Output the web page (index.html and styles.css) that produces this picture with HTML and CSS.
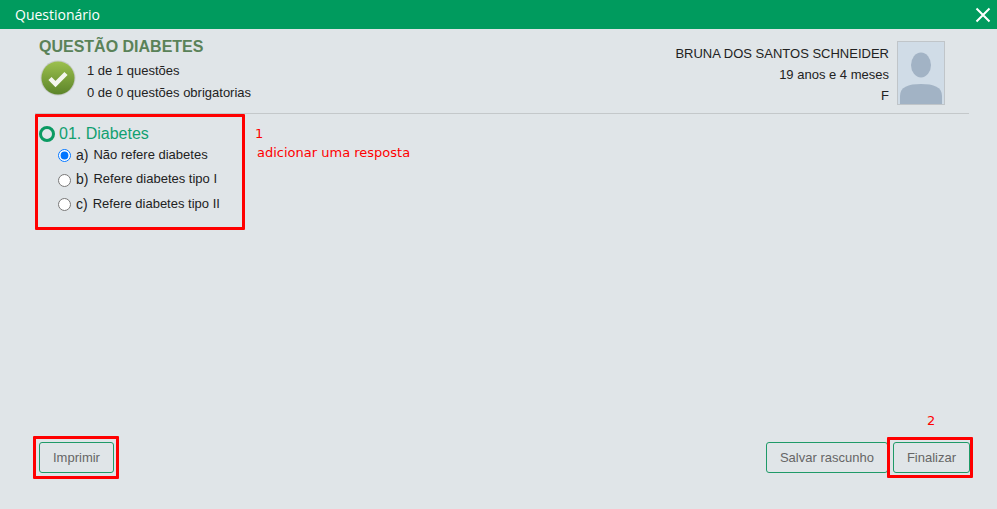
FILE: index.html
```html
<!DOCTYPE html>
<html lang="pt-BR">
<head>
<meta charset="utf-8"/>
<title>Questionário</title>
<link rel="stylesheet" href="styles.css">
</head>
<body>
<div class="modal">
  <div class="modal-header">
    <span class="modal-title">Questionário</span>
    <svg class="close-icon" width="16" height="16" viewBox="0 0 16 16"><path d="M1.5 1.5L14.5 14.5M14.5 1.5L1.5 14.5" stroke="#fff" stroke-width="2" fill="none"/></svg>
  </div>
  <div class="modal-body">
    <div class="summary">
      <div class="summary-left">
        <h2>QUESTÃO DIABETES</h2>
        <div class="progress">
          <svg class="check-icon" width="36" height="36" viewBox="0 0 36 36">
            <defs>
              <linearGradient id="ball" x1="0" y1="0" x2="0" y2="1">
                <stop offset="0" stop-color="#9cc04e"/>
                <stop offset="1" stop-color="#5c8429"/>
              </linearGradient>
            </defs>
            <circle cx="18" cy="18" r="17.5" fill="#c6cbc8"/>
            <circle cx="18" cy="18" r="16.5" fill="url(#ball)"/>
            <path d="M10 18.500L15.500 24L26 13.500" stroke="#f4f6ee" stroke-width="4.500" fill="none"/>
          </svg>
          <div class="progress-text">
            <div>1 de 1 questões</div>
            <div>0 de 0 questões obrigatorias</div>
          </div>
        </div>
      </div>
      <div class="patient">
        <div class="patient-info">
          <div>BRUNA DOS SANTOS SCHNEIDER</div>
          <div>19 anos e 4 meses</div>
          <div>F</div>
        </div>
        <div class="avatar">
          <svg width="46" height="62" viewBox="0 0 46 62">
            <rect width="46" height="62" fill="#d0dce7"/>
            <ellipse cx="23" cy="23" rx="10" ry="12.500" fill="#a2b3c5"/>
            <path d="M2 62V54C2 45 10 42 23 42S44 45 44 54V62Z" fill="#a2b3c5"/>
          </svg>
        </div>
      </div>
    </div>
    <div class="question">
      <div class="question-title"><span class="ring"></span>01. Diabetes</div>
      <label class="option"><input type="radio" name="q1" checked><span class="letter">a)</span> Não refere diabetes</label>
      <label class="option"><input type="radio" name="q1"><span class="letter">b)</span> Refere diabetes tipo I</label>
      <label class="option"><input type="radio" name="q1"><span class="letter">c)</span> Refere diabetes tipo II</label>
    </div>
  </div>
  <div class="modal-footer">
    <button class="btn">Imprimir</button>
    <div class="footer-right">
      <button class="btn btn-draft">Salvar rascunho</button>
      <button class="btn btn-finish">Finalizar</button>
    </div>
  </div>

  <!-- anotacoes por cima da tela -->
  <div class="mark mark-question"></div>
  <div class="mark mark-print"></div>
  <div class="mark mark-finish"></div>
  <span class="note note-1">1</span>
  <span class="note note-answer">adicionar uma resposta</span>
  <span class="note note-2">2</span>
</div>
</body>
</html>
```

FILE: styles.css
```css
html, body {
  margin: 0;
  padding: 0;
}
body {
  font-family: "Liberation Sans", Arial, sans-serif;
  font-size: 13px;
  color: #222;
  background: #e0e5e8;
}
.modal {
  position: relative;
  width: 997px;
  height: 509px;
  display: flex;
  flex-direction: column;
  overflow: hidden;
}
.modal-header {
  height: 29px;
  flex: none;
  background: #009b5e;
  color: #fff;
  display: flex;
  align-items: center;
  justify-content: space-between;
  padding: 0 6px 0 15px;
}
.modal-title {
  font-family: "Open Sans", sans-serif;
  font-size: 14px;
}
.modal-body {
  flex: 1;
  padding: 9px 28px 0 39px;
}
.summary {
  height: 75px;
  display: flex;
  justify-content: space-between;
  border-bottom: 1px solid #c4c8ca;
  margin-left: -4px;
  padding-left: 4px;
}
.summary h2 {
  margin: 0;
  font-size: 16px;
  line-height: 18px;
  font-weight: bold;
  color: #5a8258;
}
.progress {
  display: flex;
  margin-top: 3px;
}
.check-icon {
  flex: none;
  margin: 1px 0 0 1px;
}
.progress-text {
  margin: 1px 0 0 11px;
  line-height: 22px;
}
.patient {
  display: flex;
  margin-right: 24px;
  padding-top: 3px;
}
.patient-info {
  text-align: right;
  line-height: 21px;
  margin-top: 2px;
}
.avatar {
  width: 46px;
  height: 62px;
  margin-left: 8px;
  border: 1px solid #c0c5c9;
}
.avatar svg {
  display: block;
}
.question {
  padding-top: 10px;
}
.question-title {
  display: flex;
  align-items: center;
  font-size: 16px;
  line-height: 20px;
  color: #10a070;
  margin-bottom: -2px;
}
.ring {
  width: 10px;
  height: 10px;
  border: 3px solid #0a9a62;
  border-radius: 50%;
  margin-right: 4px;
}
.option {
  display: flex;
  align-items: center;
  height: 24.5px;
  padding-left: 19px;
}
.option input {
  width: 13px;
  height: 13px;
  margin: 3px 5px 0 0;
  accent-color: #0075ff;
}
.letter {
  font-size: 14px;
  margin: 1px 5px 0 0;
}
.modal-footer {
  flex: none;
  height: 67px;
  display: flex;
  justify-content: space-between;
  padding: 0 27px 0 39px;
  box-sizing: border-box;
}
.footer-right {
  display: flex;
}
.btn {
  height: 31px;
  padding: 0 13px;
  font-family: "Liberation Sans", Arial, sans-serif;
  font-size: 13px;
  color: #666;
  background: transparent;
  border: 1px solid #1f9a68;
  border-radius: 3px;
}
.btn-finish {
  margin-left: 5px;
}
.mark {
  position: absolute;
  border: 3px solid #f00;
  border-radius: 1px;
  box-sizing: border-box;
}
.mark-question {
  left: 35px;
  top: 114px;
  width: 210px;
  height: 116px;
}
.mark-print {
  left: 33px;
  top: 436px;
  width: 86px;
  height: 43px;
}
.mark-finish {
  left: 887px;
  top: 437px;
  width: 86px;
  height: 41px;
}
.note {
  position: absolute;
  font-family: "DejaVu Sans", sans-serif;
  font-size: 13px;
  line-height: 14px;
  color: #f00;
}
.note-1 {
  left: 255px;
  top: 127px;
}
.note-answer {
  left: 257px;
  top: 146px;
}
.note-2 {
  left: 927px;
  top: 414px;
}
```
